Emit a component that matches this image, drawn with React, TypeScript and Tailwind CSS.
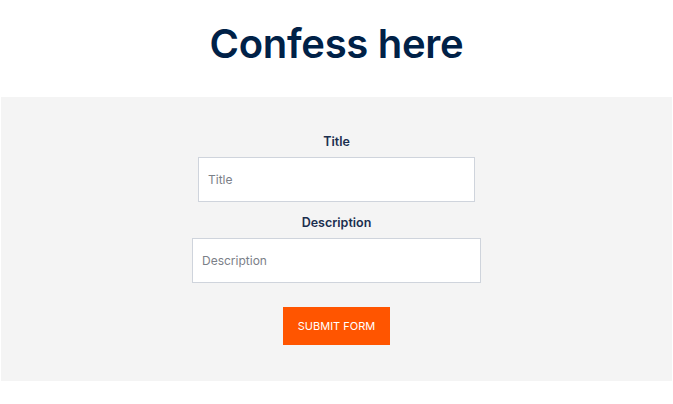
import React, { useState } from 'react';

const App: React.FC = () => {
  const [title, setTitle] = useState('');
  const [description, setDescription] = useState('');

  return (
    <div className="min-h-screen bg-white font-['Inter',sans-serif]">
      {/* Heading */}
      <div className="pt-[18px] pb-[28px] text-center">
        <h1 className="text-[40px] leading-[51px] font-semibold text-[#002147] tracking-[-0.3px]">
          Confess here
        </h1>
      </div>

      {/* Form section */}
      <form
        onSubmit={(e) => e.preventDefault()}
        className="mx-[1px] bg-[#f4f4f4] pt-[37px] pb-[36px] flex flex-col items-center"
      >
        <label className="text-[12.5px] leading-[16px] font-semibold text-[#1b2f4f]">Title</label>
        <input
          type="text"
          placeholder="Title"
          value={title}
          onChange={(e) => setTitle(e.target.value)}
          className="mt-[7px] w-[277px] h-[45px] bg-white border border-[#cfd4dc] px-[9px] text-[12px] text-gray-700 placeholder-[#7b8088] outline-none"
        />

        <label className="mt-[13px] text-[12.5px] leading-[16px] font-semibold text-[#1b2f4f]">Description</label>
        <input
          type="text"
          placeholder="Description"
          value={description}
          onChange={(e) => setDescription(e.target.value)}
          className="mt-[7px] w-[289px] h-[45px] bg-white border border-[#cfd4dc] px-[9px] text-[12px] text-gray-700 placeholder-[#7b8088] outline-none"
        />

        <button
          type="submit"
          className="mt-[24px] w-[107px] h-[38px] bg-[#ff5500] text-white text-[11px] font-normal"
        >
          SUBMIT FORM
        </button>
      </form>
    </div>
  );
};

export default App;
